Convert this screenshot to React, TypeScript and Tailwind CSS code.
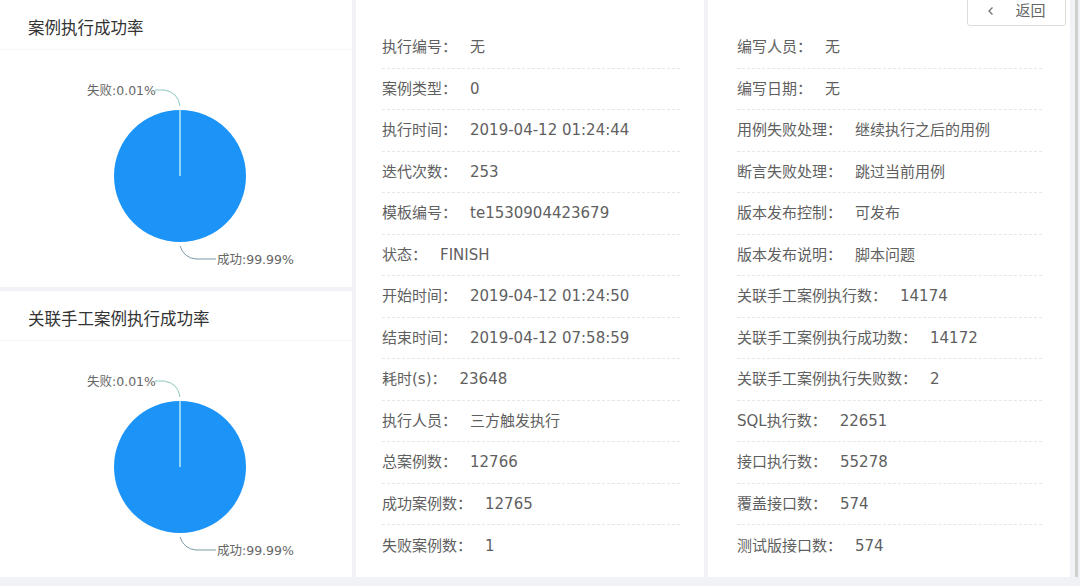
import React from 'react'

const FONT = { fontFamily: '"DejaVu Sans", "Noto Sans CJK SC", sans-serif' }

type Row = { label: string; value: string }

const middleRows: Row[] = [
  { label: '执行编号：', value: '无' },
  { label: '案例类型：', value: '0' },
  { label: '执行时间：', value: '2019-04-12 01:24:44' },
  { label: '迭代次数：', value: '253' },
  { label: '模板编号：', value: 'te1530904423679' },
  { label: '状态：', value: 'FINISH' },
  { label: '开始时间：', value: '2019-04-12 01:24:50' },
  { label: '结束时间：', value: '2019-04-12 07:58:59' },
  { label: '耗时(s)：', value: '23648' },
  { label: '执行人员：', value: '三方触发执行' },
  { label: '总案例数：', value: '12766' },
  { label: '成功案例数：', value: '12765' },
  { label: '失败案例数：', value: '1' },
]

const rightRows: Row[] = [
  { label: '编写人员：', value: '无' },
  { label: '编写日期：', value: '无' },
  { label: '用例失败处理：', value: '继续执行之后的用例' },
  { label: '断言失败处理：', value: '跳过当前用例' },
  { label: '版本发布控制：', value: '可发布' },
  { label: '版本发布说明：', value: '脚本问题' },
  { label: '关联手工案例执行数：', value: '14174' },
  { label: '关联手工案例执行成功数：', value: '14172' },
  { label: '关联手工案例执行失败数：', value: '2' },
  { label: 'SQL执行数：', value: '22651' },
  { label: '接口执行数：', value: '55278' },
  { label: '覆盖接口数：', value: '574' },
  { label: '测试版接口数：', value: '574' },
]

function PieCard({ title, className }: { title: string; className?: string }) {
  return (
    <div className={`bg-white flex flex-col ${className ?? ''}`}>
      <div className="h-[50px] shrink-0 pl-7 pt-[18px] text-[16.5px] leading-[22px] text-[#333] border-b border-[#f6f6f6]">
        {title}
      </div>
      <div className="flex-1">
        <svg width="352" height="236" viewBox="0 0 352 236">
          <circle cx="180" cy="126" r="66" fill="#1b93f7" />
          <line x1="180" y1="60" x2="180" y2="126" stroke="#8fd3f5" strokeWidth="2" />
          <path d="M155 40 L164 40 Q178 42 180 56" fill="none" stroke="#8cc9c2" strokeWidth="1" />
          <path d="M180 196 Q184 208 196 209 L216 209" fill="none" stroke="#7d9aa6" strokeWidth="1" />
          <text x="87" y="44.5" fontSize="12.5" fill="#666" style={FONT}>
            失败:0.01%
          </text>
          <text x="217" y="213.5" fontSize="12.5" fill="#666" style={FONT}>
            成功:99.99%
          </text>
        </svg>
      </div>
    </div>
  )
}

function InfoCard({ rows, className }: { rows: Row[]; className?: string }) {
  return (
    <div className={`bg-white pt-[27px] ${className ?? ''}`}>
      {rows.map((r, i) => (
        <div
          key={r.label}
          className={`h-[41.5px] flex items-center text-[15px] text-[#5f5f5f] ${
            i < rows.length - 1 ? 'border-b border-dashed border-[#e6e6e6]' : ''
          }`}
        >
          <span>{r.label}</span>
          <span className="ml-[13px]">{r.value}</span>
        </div>
      ))}
    </div>
  )
}

export default function App() {
  return (
    <div className="w-[1080px] h-[586px] bg-[#f0f2f5] overflow-hidden relative" style={FONT}>
      <div className="flex h-[577px] gap-1">
        <div className="w-[352px] flex flex-col gap-1">
          <PieCard title="案例执行成功率" className="h-[289px]" />
          <PieCard title="关联手工案例执行成功率" className="flex-1" />
        </div>
        <InfoCard rows={middleRows} className="w-[348px] pl-[26px] pr-6" />
        <div className="w-[362px] relative">
          <InfoCard rows={rightRows} className="h-full pl-[29px] pr-7" />
          <button className="absolute right-[4px] top-[-4px] h-[30px] w-[99px] flex items-center justify-center gap-5 bg-white border border-[#dcdcdc] rounded-b-[3px] text-[15px] text-[#666]">
            <svg width="8" height="10" viewBox="0 0 8 10">
              <path d="M5.5 1.5 L2 5 L5.5 8.5" fill="none" stroke="#777" strokeWidth="1.4" />
            </svg>
            <span>返回</span>
          </button>
        </div>
        <div className="w-[3px] bg-[#cfcfcf] ml-[1px]" />
      </div>
    </div>
  )
}
